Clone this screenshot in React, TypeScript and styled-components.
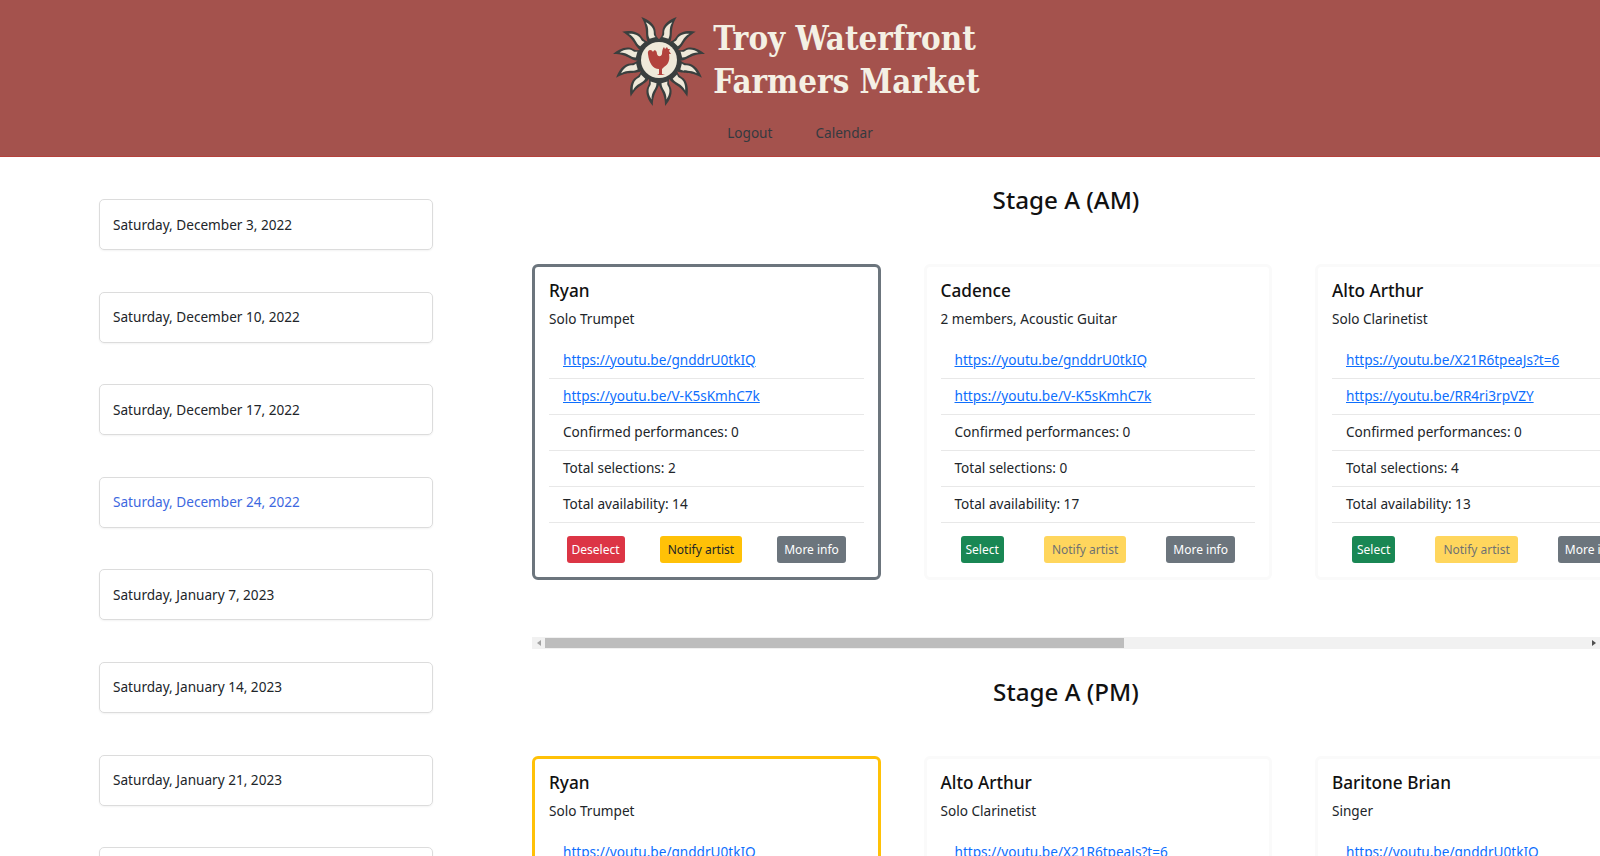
import React from "react";
import styled, { createGlobalStyle } from "styled-components";

const Global = createGlobalStyle`
  html, body { margin: 0; padding: 0; height: 856px; overflow: hidden; background: #fff; }
  body { font-family: "Noto Sans", "Open Sans", sans-serif; font-size: 13.6px; color: #212529; }
  * { box-sizing: border-box; }
`;

const Header = styled.header`
  height: 157px;
  background: #a4524d;
  border-bottom: 1px solid #b5413c;
  display: flex;
  flex-direction: column;
  align-items: center;
`;
const Brand = styled.div`
  display: flex;
  align-items: center;
  gap: 8px;
  height: 119px;
  padding-left: 1px;
  padding-right: 8px;
`;
const BrandName = styled.div`
  font-family: "DejaVu Serif Condensed", "DejaVu Serif", serif;
  font-stretch: condensed;
  font-weight: 700;
  font-size: 32.8px;
  line-height: 43px;
  color: #f4f0e4;
  white-space: pre-line;
`;
const Nav = styled.nav`
  display: flex;
  gap: 43px;
`;
const NavLink = styled.a`
  font-size: 13.6px;
  line-height: 28px;
  color: #343a40;
`;
const Page = styled.div`
  display: flex;
  align-items: flex-start;
  padding-left: 99px;
  gap: 99px;
`;
const Sidebar = styled.aside`
  flex: 0 0 334px;
  padding-top: 42px;
  display: flex;
  flex-direction: column;
  gap: 41.6px;
`;
const DateItem = styled.div<{ $active?: boolean }>`
  height: 51px;
  border: 1px solid #dcdcdc;
  border-radius: 5px;
  box-shadow: 0 1px 2px rgba(0, 0, 0, 0.05);
  padding: 0 13px 1px;
  display: flex;
  align-items: center;
  color: ${(p) => (p.$active ? "#3d68e0" : "#212529")};
`;
const Main = styled.main`
  flex: 1;
  min-width: 0;
`;
const Section = styled.section``;
const StageTitle = styled.h2`
  margin: 0;
  height: 89px;
  padding-top: 25px;
  text-align: center;
  font-size: 24.2px;
  line-height: 36px;
  font-weight: 500;
  color: #111;
`;
const CardRow = styled.div`
  margin-top: 18px;
  display: flex;
  gap: 43px;
  overflow: hidden;
`;
const Card = styled.article<{ $state?: "selected" | "warning" }>`
  flex: 0 0 348.5px;
  height: 316px;
  border: 3px solid
    ${(p) => (p.$state === "selected" ? "#6c757d" : p.$state === "warning" ? "#ffc107" : "#fafafa")};
  border-radius: 6px;
  padding: 12px 14px 0;
  background: #fff;
`;
const ArtistName = styled.h3`
  margin: 0;
  font-size: 17.2px;
  line-height: 24px;
  font-weight: 500;
  color: #111;
`;
const ArtistKind = styled.p`
  margin: 4px 0 12px;
  line-height: 24px;
`;
const InfoList = styled.ul`
  list-style: none;
  margin: 0;
  padding: 0;
`;
const InfoRow = styled.li`
  height: 36px;
  padding: 0 14px;
  line-height: 34px;
  border-bottom: 1px solid #e8e8e8;
  white-space: nowrap;
`;
const VideoLink = styled.a`
  color: #0d6efd;
  text-decoration: underline;
`;
const Actions = styled.div`
  display: flex;
  justify-content: space-around;
  margin-top: 13px;
`;
const ActionButton = styled.button<{ $kind: string; $muted?: boolean }>`
  height: 27px;
  padding: 0 ${(p) => (p.$kind === "warning" ? "8px" : p.$kind === "secondary" ? "7px" : "5px")};
  border: none;
  border-radius: 3px;
  font: inherit;
  font-size: 12px;
  white-space: nowrap;
  background: ${(p) =>
    ({ danger: "#dc3545", warning: "#ffc107", secondary: "#6c757d", success: "#198754" } as Record<string, string>)[p.$kind]};
  color: ${(p) => (p.$kind === "warning" ? "#212529" : "#fff")};
  opacity: ${(p) => (p.$muted ? 0.65 : 1)};
`;
const ScrollTrack = styled.div`
  margin-top: 57px;
  height: 12px;
  background: #f1f1f1;
  display: flex;
  align-items: center;
`;
const ScrollArrow = styled.span<{ $dir: "left" | "right" }>`
  flex: 0 0 13px;
  display: flex;
  justify-content: center;
  &::before {
    content: "";
    border-top: 3px solid transparent;
    border-bottom: 3px solid transparent;
    ${(p) => (p.$dir === "left" ? "border-right: 4px solid #a3a3a3;" : "border-left: 4px solid #505050;")}
  }
`;
const ScrollThumb = styled.div`
  flex: 0 0 579px;
  height: 10px;
  background: #bdbdbd;
`;
const ScrollGap = styled.div`
  flex: 1;
`;

const RAY_ANGLES = [15, 45, 75, 105, 135, 165];

function Logo() {
  const ray = (transform: string, key: string) => (
    <g key={key} transform={transform}>
      <path fill="#3a3f3e" d="M-6,-19 C-8,-28 -2,-32 -6,-46 C0,-42 6,-35 4,-28 C3,-25 4,-22 6,-19 Z" />
      <path fill="#efe9d9" d="M-3.6,-23 C-5,-29 -0.6,-32 -3,-40 C0.6,-37 3.6,-32 2,-27.5 C1.4,-26 1.8,-24.5 2.6,-23 Z" />
    </g>
  );
  return (
    <svg width="92" height="92" viewBox="-46 -46 92 92" aria-hidden="true">
      {RAY_ANGLES.map((a) => ray(`rotate(${-a})`, `l${a}`))}
      {RAY_ANGLES.map((a) => ray(`rotate(${a}) scale(-1 1)`, `r${a}`))}
      <circle r="20" fill="#3a3f3e" />
      <circle r="18" fill="#efe9d9" />
      <path
        fill="#b2423d"
        d="M-11,-6 C-12,-11 -7,-11 -6,-8 C-5,-11 -2,-10 -2,-6 C-1,-3 2,-3 3,-6 C3,-10 4,-12 5,-13 L6,-11 L8,-13 L9,-11 L11,-11 L10,-9 L12,-6 L10,-6 C11,-1 10,4 5,7 L3,9 L3,14 L6,15 L-2,15 L0,14 L0,9 C-6,9 -10,3 -11,-6 Z"
      />
    </svg>
  );
}

type Artist = { name: string; kind: string; links: string[]; conf: number; sel: number; avail: number; state?: "selected" | "warning" };

const ryan = ["https://youtu.be/gnddrU0tkIQ", "https://youtu.be/V-K5sKmhC7k"];
const arthur = ["https://youtu.be/X21R6tpeaJs?t=6", "https://youtu.be/RR4ri3rpVZY"];

const sections: { title: string; artists: Artist[] }[] = [
  {
    title: "Stage A (AM)",
    artists: [
      { name: "Ryan", kind: "Solo Trumpet", links: ryan, conf: 0, sel: 2, avail: 14, state: "selected" },
      { name: "Cadence", kind: "2 members, Acoustic Guitar", links: ryan, conf: 0, sel: 0, avail: 17 },
      { name: "Alto Arthur", kind: "Solo Clarinetist", links: arthur, conf: 0, sel: 4, avail: 13 },
    ],
  },
  {
    title: "Stage A (PM)",
    artists: [
      { name: "Ryan", kind: "Solo Trumpet", links: ryan, conf: 0, sel: 2, avail: 14, state: "warning" },
      { name: "Alto Arthur", kind: "Solo Clarinetist", links: arthur, conf: 0, sel: 4, avail: 13 },
      { name: "Baritone Brian", kind: "Singer", links: ryan, conf: 0, sel: 1, avail: 12 },
    ],
  },
];

const dates = [
  "Saturday, December 3, 2022",
  "Saturday, December 10, 2022",
  "Saturday, December 17, 2022",
  "Saturday, December 24, 2022",
  "Saturday, January 7, 2023",
  "Saturday, January 14, 2023",
  "Saturday, January 21, 2023",
  "Saturday, January 28, 2023",
];

export default function App() {
  return (
    <>
      <Global />
      <Header>
        <Brand>
          <Logo />
          <BrandName>{"Troy Waterfront\nFarmers Market"}</BrandName>
        </Brand>
        <Nav>
          <NavLink>Logout</NavLink>
          <NavLink>Calendar</NavLink>
        </Nav>
      </Header>
      <Page>
        <Sidebar>
          {dates.map((d, i) => (
            <DateItem key={d} $active={i === 3}>{d}</DateItem>
          ))}
        </Sidebar>
        <Main>
          {sections.map((s) => (
            <Section key={s.title}>
              <StageTitle>{s.title}</StageTitle>
              <CardRow>
                {s.artists.map((a) => (
                  <Card key={a.name} $state={a.state}>
                    <ArtistName>{a.name}</ArtistName>
                    <ArtistKind>{a.kind}</ArtistKind>
                    <InfoList>
                      {a.links.map((l) => (
                        <InfoRow key={l}><VideoLink href={l}>{l}</VideoLink></InfoRow>
                      ))}
                      <InfoRow>Confirmed performances: {a.conf}</InfoRow>
                      <InfoRow>Total selections: {a.sel}</InfoRow>
                      <InfoRow>Total availability: {a.avail}</InfoRow>
                    </InfoList>
                    <Actions>
                      {a.state === "selected" ? (
                        <ActionButton $kind="danger">Deselect</ActionButton>
                      ) : (
                        <ActionButton $kind="success">Select</ActionButton>
                      )}
                      <ActionButton $kind="warning" $muted={!a.state}>Notify artist</ActionButton>
                      <ActionButton $kind="secondary">More info</ActionButton>
                    </Actions>
                  </Card>
                ))}
              </CardRow>
              <ScrollTrack>
                <ScrollArrow $dir="left" />
                <ScrollThumb />
                <ScrollGap />
                <ScrollArrow $dir="right" />
              </ScrollTrack>
            </Section>
          ))}
        </Main>
      </Page>
    </>
  );
}
